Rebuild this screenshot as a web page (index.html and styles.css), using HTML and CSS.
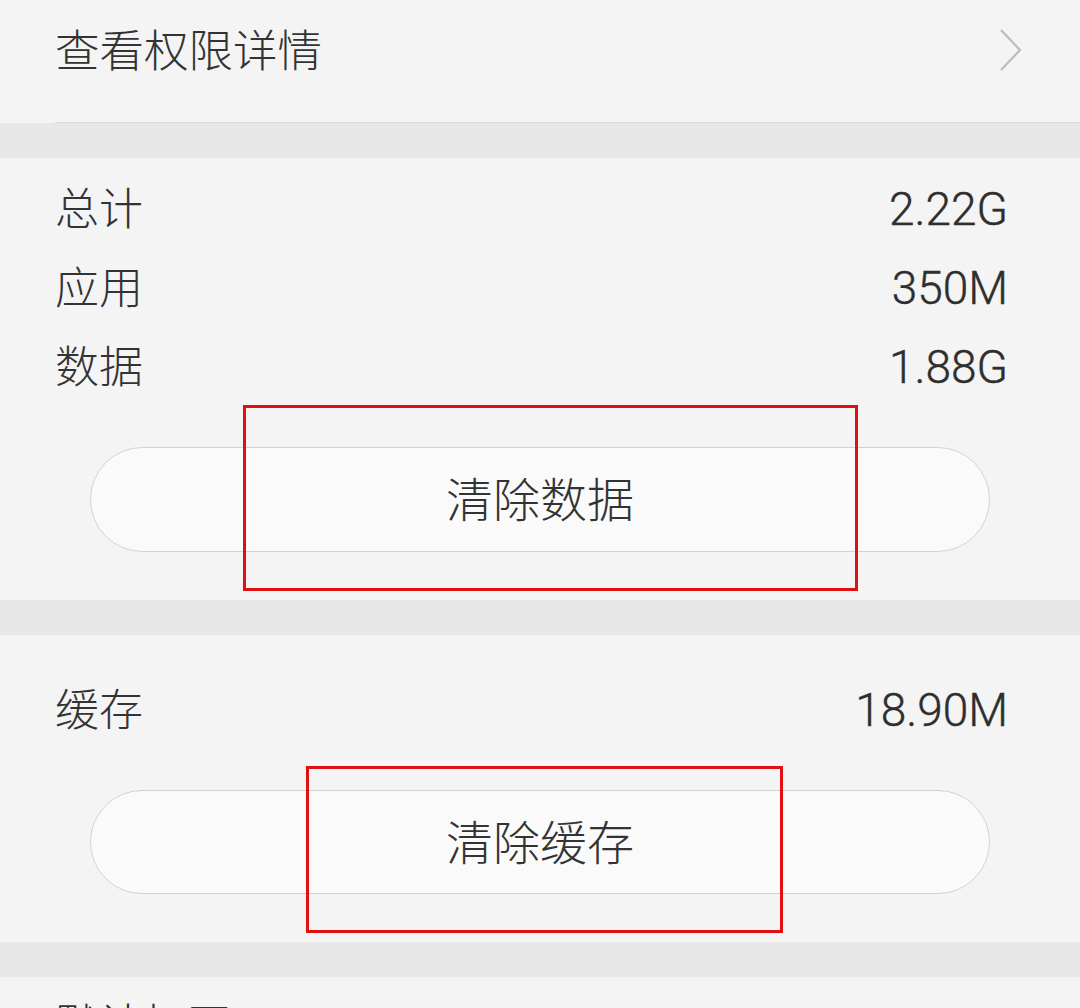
FILE: index.html
```html
<!DOCTYPE html>
<html lang="zh-CN">
<head>
<meta charset="utf-8">
<link rel="stylesheet" href="styles.css">
<title>应用信息</title>
</head>
<body>
<div class="page">
  <section class="section top">
    <div class="nav-row">
      <span class="label">查看权限详情</span>
      <svg class="chevron" width="24" height="42" viewBox="0 0 24 42"><path d="M2 1 L21 21 L2 41" fill="none" stroke="#bdbdbd" stroke-width="2.2"/></svg>
    </div>
    <div class="divider"></div>
  </section>
  <div class="band"></div>
  <section class="section storage">
    <div class="row"><span class="label">总计</span><span class="value">2.22G</span></div>
    <div class="row"><span class="label">应用</span><span class="value">350M</span></div>
    <div class="row"><span class="label">数据</span><span class="value">1.88G</span></div>
    <div class="btn-wrap">
      <button class="pill">清除数据</button>
    </div>
    <div class="mark mark-data"></div>
  </section>
  <div class="band"></div>
  <section class="section cache">
    <div class="row"><span class="label">缓存</span><span class="value">18.90M</span></div>
    <div class="btn-wrap">
      <button class="pill">清除缓存</button>
    </div>
    <div class="mark mark-cache"></div>
  </section>
  <div class="band"></div>
  <section class="section last">
    <div class="row-partial"><span class="label">默认打开</span></div>
  </section>
</div>
</body>
</html>
```

FILE: styles.css
```css
html, body {
  margin: 0;
  padding: 0;
  background: #f4f4f4;
}
body {
  font-family: "Noto Sans CJK SC", "Noto Sans", sans-serif;
  color: #333333;
  width: 1080px;
  height: 1008px;
  overflow: hidden;
}
.page {
  display: flex;
  flex-direction: column;
}
.section {
  background: #f4f4f4;
  position: relative;
}
.band {
  height: 35px;
  background: #e7e7e7;
}
.label {
  font-family: "Noto Sans CJK SC", sans-serif;
  font-weight: 300;
  font-size: 44px;
  line-height: 1;
  color: #333333;
}
.value {
  font-family: Roboto, "Noto Sans", sans-serif;
  font-weight: 300;
  font-size: 46px;
  line-height: 1;
  color: #2e2e2e;
  margin-top: 6px;
  -webkit-text-stroke: 0.4px #2e2e2e;
}
.top {
  height: 123px;
  display: flex;
  flex-direction: column;
}
.nav-row {
  height: 122px;
  box-sizing: border-box;
  padding: 0 57px 26px 55px;
  display: flex;
  align-items: center;
  justify-content: space-between;
}
.top .label {
  font-size: 44.5px;
}
.chevron {
  display: block;
  margin-top: 4px;
}
.divider {
  height: 1px;
  margin-left: 55px;
  background: #dadada;
}
.storage {
  padding-top: 8px;
  height: 442px;
  box-sizing: border-box;
}
.row {
  height: 79px;
  padding: 0 72px 0 55px;
  display: flex;
  align-items: center;
  justify-content: space-between;
}
.btn-wrap {
  margin-top: 44px;
  padding: 0 90px;
}
.pill {
  display: flex;
  align-items: center;
  justify-content: center;
  width: 100%;
  height: 105px;
  box-sizing: border-box;
  border: 1.5px solid #d2d2d2;
  border-radius: 53px;
  background: #fafafa;
  font-family: "Noto Sans CJK SC", sans-serif;
  font-weight: 300;
  font-size: 47px;
  color: #333333;
  padding: 0 0 6px 0;
}
.cache {
  padding-top: 32px;
  height: 307px;
  box-sizing: border-box;
}
.cache .btn-wrap {
  margin-top: 44px;
}
.cache .pill {
  height: 104px;
}
.last {
  height: 60px;
  padding: 23px 55px 0;
  box-sizing: border-box;
}
.row-partial .label {
  display: block;
  line-height: 44px;
}
.mark {
  position: absolute;
  border: 3px solid #e01010;
  box-sizing: border-box;
}
.mark-data {
  left: 243px;
  top: 247px;
  width: 615px;
  height: 186px;
}
.mark-cache {
  left: 306px;
  top: 131px;
  width: 477px;
  height: 167px;
}
```
